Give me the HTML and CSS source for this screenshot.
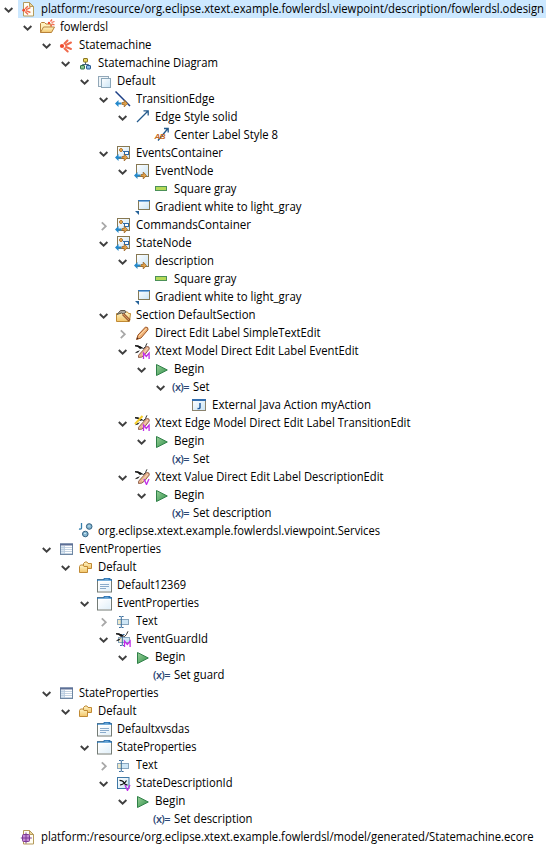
FILE: index.html
```html
<!DOCTYPE html>
<html lang="en">
<head>
<meta charset="utf-8">
<title>Model Explorer</title>
<link rel="stylesheet" href="styles.css">
</head>
<body>
<svg class="defs" aria-hidden="true">
  <defs>
    <linearGradient id="gFolder" x1="0" y1="0" x2="0" y2="1"><stop offset="0" stop-color="#fff6c8"/><stop offset="1" stop-color="#f2c468"/></linearGradient>
    <linearGradient id="gBlue" x1="0" y1="0" x2="1" y2="1"><stop offset="0" stop-color="#ffffff"/><stop offset="1" stop-color="#c9e4f5"/></linearGradient>
    <linearGradient id="gPlay" x1="0" y1="0" x2="1" y2="1"><stop offset="0" stop-color="#9ad09a"/><stop offset="1" stop-color="#2f9148"/></linearGradient>
  </defs>
  <symbol id="burst" viewBox="0 0 16 16">
    <circle cx="4" cy="9" r="2.100" fill="#f0492c"/>
    <g stroke="#f06a4c" stroke-width="2" stroke-linecap="round" fill="none"><path d="M6.500 6.500 9.500 3.500M8 8l5-2.500M8 10l5 2M6.500 11.500l3.200 3"/></g>
  </symbol>
  <symbol id="page" viewBox="0 0 16 16">
    <path d="M3.500 1.500h6l4 4v9.500h-10z" fill="#fffdf2" stroke="#b59a5c"/><path d="M9.500 1.500v4h4z" fill="#ecd596" stroke="#b59a5c"/>
  </symbol>
  <symbol id="odesign" viewBox="0 0 16 16"><use href="#page"/><use href="#burst" x="1" y="3" width="11" height="11"/></symbol>
  <symbol id="ecore" viewBox="0 0 16 16">
    <use href="#page"/><rect x="2.500" y="5.500" width="7" height="7" rx="1" fill="#c58bd6" stroke="#7b3a94"/><path d="M6 3.500v11M.8 9h11" stroke="#7b3a94"/>
  </symbol>
  <symbol id="project" viewBox="0 0 16 16">
    <path d="M1.500 13.500v-9l1-1h3l1.500 1.500h5v3" fill="#fff0bd" stroke="#b8823a"/><path d="M1.500 13.500 4.500 8h11l-3 5.500z" fill="url(#gFolder)" stroke="#b8823a"/>
    <circle cx="10" cy="4" r="1.200" fill="#f0492c"/><path d="m11.500 2.500 1.500-2M12.500 3.500l3-1M12.500 4.800l3 1M11.500 5.800 13 7.300" stroke="#f0694b" stroke-width="1.300"/>
  </symbol>
  <symbol id="diagram" viewBox="0 0 16 16">
    <path d="M8.500 7v2.500M5.500 11V9.500h6V11" fill="none" stroke="#47627e"/>
    <rect x="6.500" y="3.500" width="4" height="3.500" rx=".5" fill="#e8da62" stroke="#8a7523"/>
    <rect x="3.500" y="10.500" width="4" height="3.500" rx=".5" fill="#8cc58f" stroke="#30704a"/>
    <rect x="9.500" y="10.500" width="4" height="3.500" rx=".5" fill="#8bbbe8" stroke="#285b94"/>
  </symbol>
  <symbol id="layer" viewBox="0 0 16 16">
    <rect x="2.500" y="3.500" width="10" height="10" fill="#eef4f8" stroke="#93a8b8"/><rect x="5.500" y="5.500" width="9" height="9" fill="url(#gBlue)" stroke="#8ba7ba"/>
  </symbol>
  <symbol id="arrows" viewBox="0 0 16 16">
    <path d="M0 12.500 3.500 9v2.500h3v2h-3V16z" fill="#2489cc"/><path d="M12.500 12.500 9.200 9v2.500H7v2h2.200V16z" fill="#e0a048" stroke="#96601f" stroke-width=".7"/>
  </symbol>
  <symbol id="edge" viewBox="0 0 16 16"><path d="M.5.500 15 15" stroke="#1c3f86" stroke-width="1.500"/><use href="#arrows"/></symbol>
  <symbol id="edgestyle" viewBox="0 0 16 16"><path d="M3 13 14 2M9.500 1.800h4.700v4.700" fill="none" stroke="#245a8c" stroke-width="1.300"/></symbol>
  <symbol id="labelstyle" viewBox="0 0 16 16">
    <path d="M5 13.500 14.500 2M11 1.500h4.200v4" fill="none" stroke="#245a8c" stroke-width="1.300"/>
    <text x="1.500" y="11.500" class="badge">AB</text>
  </symbol>
  <symbol id="container" viewBox="0 0 16 16">
    <rect x="2.500" y="1.500" width="12" height="12" fill="url(#gBlue)" stroke="#877852"/>
    <circle cx="6" cy="5" r="1.500" fill="#f5ba5e" stroke="#b87325"/><path d="M7.500 5.500 9 7" stroke="#2c6aa8"/><rect x="9.500" y="6.500" width="4" height="3" fill="#fff" stroke="#2c6aa8"/><use href="#arrows"/>
  </symbol>
  <symbol id="node" viewBox="0 0 16 16"><rect x="2.500" y="1.500" width="12" height="12" fill="url(#gBlue)" stroke="#877852"/><use href="#arrows"/></symbol>
  <symbol id="square" viewBox="0 0 16 16"><rect x="2.500" y="5.500" width="11" height="4" fill="#b5d957" stroke="#4c9159"/></symbol>
  <symbol id="gradient" viewBox="0 0 16 16">
    <rect x="4.500" y="1.500" width="11" height="9" fill="url(#gBlue)" stroke="#857a57"/><path d="M4 1.500h12" stroke="#3477b8"/><path d="M5 2.500h10" stroke="#7db0df"/><path d="M1 12h4v4z" fill="#266298"/>
  </symbol>
  <symbol id="section" viewBox="0 0 16 16">
    <path d="M1.500 14.500v-8h4l1-1.500h6l1 1.500h2l-1 8z" fill="url(#gFolder)" stroke="#c08a35"/><path d="M2 7.500 5.500 3.500H10L11 5 8.500 7 6.500 6z" fill="#aaa69c" stroke="#625b4f"/><path d="m8 7 6.500 6.500" stroke="#7a3d1e" stroke-width="2.600"/><path d="m8 7 6 6" stroke="#d79558" stroke-width="1.200"/>
  </symbol>
  <symbol id="pencil" viewBox="0 0 16 16">
    <path d="M2.500 14.500 4 10l7.500-8q3 0 2.500 2.800L7 13z" fill="#efb176" stroke="#9d5626"/><path d="m5 11 7.500-7.500" stroke="#fbd8aa"/><path d="m2.500 14.500.8-2.300 1.500 1.300z" fill="#4b281a"/>
  </symbol>
  <symbol id="swoosh" viewBox="0 0 16 16">
    <path d="M1 2.800Q4 2 7 4.500T11.500 3.500 13 .3" fill="none" stroke="#161616" stroke-width=".9"/><path d="M1 2.200Q6 2 8.500 5L6 6Q4 3.500 1 3.200zM.8 10.200Q2 8 6 7.200L4 9.500z" fill="#151515"/>
  </symbol>
  <symbol id="letterM" viewBox="0 0 16 16"><path d="M9.500 16V10l2.800 3.500L15.100 10v6" fill="none" stroke="#c02ee8" stroke-width="1.300"/></symbol>
  <symbol id="letterV" viewBox="0 0 16 16"><path d="m10 10 2.500 5.500L15 10" fill="none" stroke="#c02ee8" stroke-width="1.300"/></symbol>
  <symbol id="brush" viewBox="0 0 16 16"><path d="M4.500 14.500q-1-2 2-4.500l6-6.500q3.300-.5 2.800 2.500L10.500 12q-2.500 3-6 2.500z" fill="#e8b38f" stroke="#7d4c38" stroke-width=".8"/><path d="m8 12 6-7" stroke="#f8d9bf"/></symbol>
  <symbol id="xmodel" viewBox="0 0 16 16"><use href="#brush"/><use href="#swoosh"/><use href="#letterM"/></symbol>
  <symbol id="xedge" viewBox="0 0 16 16"><use href="#brush"/><use href="#swoosh"/><path d="M1 9 8.500 1" stroke="#f4cd2c" stroke-width="2"/><use href="#letterM"/></symbol>
  <symbol id="xvalue" viewBox="0 0 16 16"><use href="#brush"/><use href="#swoosh"/><use href="#letterV"/></symbol>
  <symbol id="begin" viewBox="0 0 16 16"><path d="M3.500 3.500 14.300 9 3.500 14.500z" fill="url(#gPlay)" stroke="#2f8048"/></symbol>
  <symbol id="java" viewBox="0 0 16 16">
    <rect x="1.500" y="2.500" width="13" height="11" fill="url(#gBlue)" stroke="#8b836d"/><path d="M1 3h14" stroke="#346eaf" stroke-width="2"/><path d="M9 6v4.500q-.3 1.500-2.500 1" fill="none" stroke="#245e9e" stroke-width="1.500"/>
  </symbol>
  <symbol id="services" viewBox="0 0 16 16">
    <path d="M4.500 0V5q-.3 1.500-2.500 1" fill="none" stroke="#3680ad" stroke-width="1.300"/><circle cx="12.200" cy="3.500" r="2.800" fill="#87b7d1" stroke="#315f7f"/><circle cx="8.300" cy="11" r="2.800" fill="#87b7d1" stroke="#315f7f"/><path d="M11 3h2M7 10.500h2" stroke="#c7e4f0"/>
  </symbol>
  <symbol id="table" viewBox="0 0 16 16">
    <rect x="2.500" y="3" width="12" height="10.500" fill="#fff" stroke="#6f87a3"/><path d="M2 3.500h13" stroke="#5d6f96" stroke-width="2"/><path d="M3 6.500h11M3 8.500h11M3 10.500h11M3 12.500h11M6.500 5v8" stroke="#b5c8da" stroke-width=".8"/><path d="M3 5h3v8H3z" fill="#b6cee4" opacity=".5"/>
  </symbol>
  <symbol id="folders" viewBox="0 0 16 16">
    <path d="M6.500 9.500V4.500L8 3h2l1 1.500h3.500v5z" fill="url(#gFolder)" stroke="#c08a35"/><path d="M2.500 13.500v-6L3.500 6h2.500l1 1.500h3.500v6z" fill="url(#gFolder)" stroke="#c08a35"/>
  </symbol>
  <symbol id="window" viewBox="0 0 16 16">
    <rect x="1.500" y="2.500" width="14" height="12.500" fill="#fff" stroke="#737b75"/><path d="M2.500 14V5h12v9z" fill="url(#gBlue)" opacity=".55"/><path d="M1 4h15V2.500h-1L14 1H8L7 2.500H1z" fill="#2b72b3"/><path d="M8.500 2.300h4M2 3.500h13" stroke="#75aeda"/>
  </symbol>
  <symbol id="group" viewBox="0 0 16 16"><use href="#window"/><path d="M4 7.500h9M4 9.500h9M4 11.500h6" stroke="#7ea2c5" stroke-width=".9"/></symbol>
  <symbol id="text" viewBox="0 0 16 16">
    <rect x="2.500" y="6.500" width="11" height="5" fill="#eee9cb" stroke="#89a7bf"/><path d="M7 7h6v4H7z" fill="#cee6f6"/><path d="M4 3.500h1.800l.5.500.5-.5h1.800M6.300 4v10M4 14.500h1.800l.5-.5.5.5h1.800" fill="none" stroke="#386c9c"/>
  </symbol>
  <symbol id="xtextmodel" viewBox="0 0 16 16"><use href="#text" x="1"/><use href="#swoosh"/><use href="#letterM"/></symbol>
  <symbol id="xtextvalue" viewBox="0 0 16 16">
    <rect x="2.500" y="2.500" width="11.500" height="11" fill="url(#gBlue)" stroke="#3e78a6"/><path d="M4.500 5.300q3.500 0 4.500 2.500t3.500 2M5 10q4-.5 6.500-4.500" fill="none" stroke="#111" stroke-width="1.200"/><use href="#letterV"/>
  </symbol>
  <symbol id="open" viewBox="0 0 18 18"><path d="m4.800 8 3.800 3.700L12.400 8" fill="none" stroke="#404040" stroke-width="1.900"/></symbol>
  <symbol id="closed" viewBox="0 0 18 18"><path d="m6.800 6.300 4 3.900-4 3.900" fill="none" stroke="#a8a8a8" stroke-width="1.800"/></symbol>
</svg>
<ul class="tree" id="tree"></ul>
<script src="tree.js"></script>
</body>
</html>
```
FILE: styles.css
```css
body {
  margin: 0;
  background: #fff;
  color: #000;
  font: 12px/18px "Open Sans", "Noto Sans", sans-serif;
}
.defs {
  position: absolute;
  width: 0;
  height: 0;
}
.badge {
  fill: #c56a25;
  font: bold italic 8px/1 "Liberation Sans", sans-serif;
  letter-spacing: -0.5px;
}
.tree {
  margin: 0;
  padding: 0;
  list-style: none;
}
.row {
  display: flex;
  height: 18px;
  padding-left: calc(var(--depth) * 19px);
}
.toggle {
  flex: none;
  width: 18px;
  height: 18px;
}
.item {
  display: flex;
  padding: 0 2px;
  white-space: nowrap;
}
.selected .item {
  background: #cce8ff;
}
.icon {
  flex: none;
  width: 16px;
  height: 16px;
  margin: 1px 5px 0 0;
}
.variable {
  color: #2b4775;
  font-size: 11px;
  font-weight: 600;
  line-height: 15px;
  letter-spacing: -0.6px;
}
.label {
  width: var(--width);
}
.label span {
  display: inline-block;
  transform-origin: 0 50%;
}
```
FILE: tree.js
```js
// depth, toggle (open / closed / none), icon, label, label width
const rows = [
  [0, "open", "odesign", "platform:/resource/org.eclipse.xtext.example.fowlerdsl.viewpoint/description/fowlerdsl.odesign", 503],
  [1, "open", "project", "fowlerdsl", 48],
  [2, "open", "burst", "Statemachine", 72.5],
  [3, "open", "diagram", "Statemachine Diagram", 120],
  [4, "open", "layer", "Default", 38.5],
  [5, "open", "edge", "TransitionEdge", 78.5],
  [6, "open", "edgestyle", "Edge Style solid", 82.5],
  [7, "", "labelstyle", "Center Label Style 8", 104],
  [5, "open", "container", "EventsContainer", 87],
  [6, "open", "node", "EventNode", 58.5],
  [7, "", "square", "Square gray", 62.5],
  [6, "", "gradient", "Gradient white to light_gray", 146.5],
  [5, "closed", "container", "CommandsContainer", 115],
  [5, "open", "container", "StateNode", 55.5],
  [6, "open", "node", "description", 59],
  [7, "", "square", "Square gray", 62.5],
  [6, "", "gradient", "Gradient white to light_gray", 146.5],
  [5, "open", "section", "Section DefaultSection", 119.5],
  [6, "closed", "pencil", "Direct Edit Label SimpleTextEdit", 165.5],
  [6, "open", "xmodel", "Xtext Model Direct Edit Label EventEdit", 203.5],
  [7, "open", "begin", "Begin", 30.5],
  [8, "open", "variable", "Set", 16.5],
  [9, "", "java", "External Java Action myAction", 159],
  [6, "open", "xedge", "Xtext Edge Model Direct Edit Label TransitionEdit", 255.5],
  [7, "open", "begin", "Begin", 30.5],
  [8, "", "variable", "Set", 16.5],
  [6, "open", "xvalue", "Xtext Value Direct Edit Label DescriptionEdit", 228.5],
  [7, "open", "begin", "Begin", 30.5],
  [8, "", "variable", "Set description", 78.5],
  [3, "", "services", "org.eclipse.xtext.example.fowlerdsl.viewpoint.Services", 282],
  [2, "open", "table", "EventProperties", 82],
  [3, "open", "folders", "Default", 38.5],
  [4, "", "group", "Default12369", 69],
  [4, "open", "window", "EventProperties", 82],
  [5, "closed", "text", "Text", 21.5],
  [5, "open", "xtextmodel", "EventGuardId", 72],
  [6, "open", "begin", "Begin", 30.5],
  [7, "", "variable", "Set guard", 50.5],
  [2, "open", "table", "StateProperties", 79.5],
  [3, "open", "folders", "Default", 38.5],
  [4, "", "group", "Defaultxvsdas", 72.5],
  [4, "open", "window", "StateProperties", 79.5],
  [5, "closed", "text", "Text", 21.5],
  [5, "open", "xtextvalue", "StateDescriptionId", 96.5],
  [6, "open", "begin", "Begin", 30.5],
  [7, "", "variable", "Set description", 78.5],
  [0, "", "ecore", "platform:/resource/org.eclipse.xtext.example.fowlerdsl/model/generated/Statemachine.ecore", 492.5]
];

const tree = document.getElementById("tree");
tree.innerHTML = rows.map(([depth, toggle, icon, label, width], i) => {
  const glyph = icon === "variable"
    ? '<span class="icon variable">(x)=</span>'
    : `<svg class="icon"><use href="#${icon}"/></svg>`;
  return `<li class="row${i === 0 ? " selected" : ""}" style="--depth:${depth}">
    <svg class="toggle">${toggle ? `<use href="#${toggle}"/>` : ""}</svg>
    <div class="item">${glyph}<div class="label" style="--width:${width}px"><span>${label}</span></div></div>
  </li>`;
}).join("");

// Condense each label to its column width.
tree.querySelectorAll(".label").forEach((box) => {
  const text = box.firstElementChild;
  text.style.transform = `scaleX(${parseFloat(box.style.getPropertyValue("--width")) / text.getBoundingClientRect().width})`;
});
```
